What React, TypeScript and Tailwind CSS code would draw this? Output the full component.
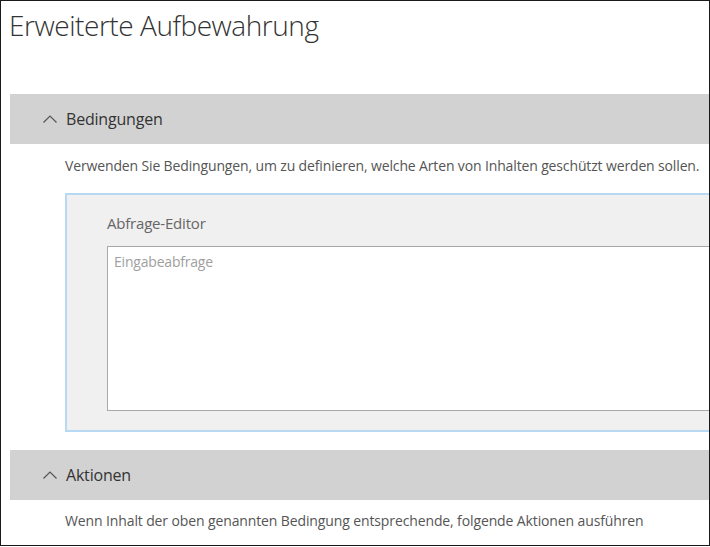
import React from 'react';

const Chevron = () => (
  <svg width="16" height="10" viewBox="0 0 16 10" className="shrink-0">
    <path d="M1.5 8.5 L8 2 L14.5 8.5" fill="none" stroke="#555" strokeWidth="1.2" />
  </svg>
);

const SectionHeader = ({ title }: { title: string }) => (
  <div className="ml-[9px] h-[50px] bg-[#d2d2d2] flex items-center pl-[32px] gap-[8px] w-[760px]">
    <Chevron />
    <span className="text-[16px] text-[#333] tracking-[-0.2px]">{title}</span>
  </div>
);

export default function App() {
  return (
    <div className="w-[710px] h-[546px] border border-[#1a1a1a] bg-white overflow-hidden font-['Open_Sans',sans-serif]">
      <div className="pl-[8px] pt-[4px]">
        <h1 className="text-[28px] font-light text-[#333] leading-[40px] tracking-[-0.45px]">Erweiterte Aufbewahrung</h1>
      </div>
      <div className="mt-[49px]">
        <SectionHeader title="Bedingungen" />
        <p className="pl-[64px] pt-[11px] text-[14px] text-[#555] leading-[22px] tracking-[-0.14px] whitespace-nowrap">
          Verwenden Sie Bedingungen, um zu definieren, welche Arten von Inhalten geschützt werden sollen.
        </p>
        <div className="ml-[64px] mt-[16px] w-[700px] h-[239px] border-2 border-[#b7d9f3] bg-[#f0f0f0] pl-[40px] pt-[16px]">
          <div className="text-[15px] text-[#666] leading-[24px] tracking-[-0.2px]">Abfrage-Editor</div>
          <div className="mt-[11px] h-[165px] bg-white border border-[#a8a8a8] px-[6px] pt-[2px]">
            <span className="text-[14px] text-[#a0a0a0] leading-[22px] tracking-[-0.2px]">Eingabeabfrage</span>
          </div>
        </div>
        <div className="mt-[18px]">
          <SectionHeader title="Aktionen" />
        </div>
        <p className="pl-[64px] pt-[10px] text-[14px] text-[#555] leading-[22px] tracking-[-0.12px] whitespace-nowrap">
          Wenn Inhalt der oben genannten Bedingung entsprechende, folgende Aktionen ausführen
        </p>
      </div>
    </div>
  );
}
